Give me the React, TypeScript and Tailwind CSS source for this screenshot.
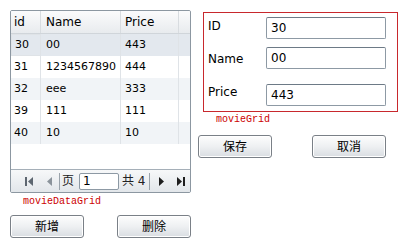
import React from 'react';

const rows = [
  { id: '30', name: '00', price: '443' },
  { id: '31', name: '1234567890', price: '444' },
  { id: '32', name: 'eee', price: '333' },
  { id: '39', name: '111', price: '111' },
  { id: '40', name: '10', price: '10' },
];

const cjk = "font-['DejaVu_Sans','Noto_Sans_CJK_SC',sans-serif]";
const mono = "font-['Liberation_Mono','Noto_Sans_CJK_SC',monospace]";

const Btn: React.FC<{ label: string }> = ({ label }) => (
  <button className="w-[74px] h-[23px] rounded-[3px] border border-[#7a8087] bg-gradient-to-b from-[#fdfdfd] via-[#eef0f2] to-[#d9dde2] text-[12px] text-black leading-none flex items-center justify-center shadow-[inset_0_0_0_1px_#ffffff]">
    {label}
  </button>
);

const Field: React.FC<{ label: string; value: string; mt: string; rowMt: string }> = ({ label, value, mt, rowMt }) => (
  <div className={`flex items-start ${rowMt}`}>
    <div className={`w-[58px] text-[12px] leading-[14px] text-black ${mt}`}>{label}</div>
    <div className="w-[120px] h-[22px] rounded-[2px] border border-[#8d99a4] border-t-[#6d7a86] bg-white pl-[4px] flex items-center text-[12px] text-black">
      {value}
    </div>
  </div>
);

export default function App() {
  return (
    <div className={`w-[412px] h-[245px] bg-white flex pl-[10px] pt-[10px] ${cjk}`}>
      {/* DataGrid column */}
      <div className="w-[181px] flex flex-col">
        <div className="h-[183px] rounded-[2px] border border-[#8c97a1] flex flex-col overflow-hidden text-[11px] text-black">
          {/* header */}
          <div className="grid grid-cols-[30px_80px_58px_11px] h-[23px] bg-gradient-to-b from-[#fbfbfc] to-[#e8ebee] border-b border-[#d0d5da]">
            <div className="border-r border-[#d8dce0] pl-[3px] flex items-center text-[12px]">id</div>
            <div className="border-r border-[#d8dce0] pl-[5px] flex items-center text-[12px]">Name</div>
            <div className="border-r border-[#d8dce0] pl-[4px] flex items-center text-[12px]">Price</div>
            <div />
          </div>
          {rows.map((r, i) => (
            <div
              key={r.id}
              className={`grid grid-cols-[30px_80px_58px_11px] h-[22px] ${
                i === 0 ? 'bg-[#e3e8ee]' : i % 2 === 0 ? 'bg-[#f1f4f7]' : 'bg-white'
              }`}
            >
              <div
                className={`border-r border-[#dfe3e7] pl-[3px] flex items-center ${
                  i === 0 ? 'border border-[#7fb1cf]' : ''
                }`}
              >
                {r.id}
              </div>
              <div className="border-r border-[#dfe3e7] pl-[5px] flex items-center">{r.name}</div>
              <div className="border-r border-[#dfe3e7] pl-[4px] flex items-center">{r.price}</div>
              <div />
            </div>
          ))}
          <div className="flex-1 bg-white" />
          {/* pager */}
          <div className="h-[23px] border-t border-[#a5afb8] bg-gradient-to-b from-[#f7f8f9] to-[#e2e6ea] flex items-center text-[12px] text-[#222]">
            <svg width="9" height="9" viewBox="0 0 9 9" className="ml-[14px]">
              <rect x="0" y="0" width="2" height="9" fill="#5d6670" />
              <path d="M8 0 L3 4.5 L8 9 Z" fill="#5d6670" />
            </svg>
            <svg width="6" height="9" viewBox="0 0 6 9" className="ml-[13px]">
              <path d="M5 0 L0 4.5 L5 9 Z" fill="#8b939b" />
            </svg>
            <div className="ml-[6px] w-px h-[17px] bg-[#9aa3ab]" />
            <span className="ml-[2px]">页</span>
            <div className="ml-[5px] w-[40px] h-[17px] rounded-[2px] border border-[#8d99a4] bg-white pl-[3px] flex items-center text-[12px] text-black">1</div>
            <span className="ml-[3px]">共 4</span>
            <div className="ml-[4px] w-px h-[17px] bg-[#9aa3ab]" />
            <svg width="6" height="9" viewBox="0 0 6 9" className="ml-[9px]">
              <path d="M0 0 L5 4.5 L0 9 Z" fill="#1e1e1e" />
            </svg>
            <svg width="8" height="9" viewBox="0 0 8 9" className="ml-[12px]">
              <path d="M0 0 L5 4.5 L0 9 Z" fill="#1e1e1e" />
              <rect x="6" y="0" width="2" height="9" fill="#1e1e1e" />
            </svg>
          </div>
        </div>
        <div className={`mt-[2px] pl-[13px] text-[10px] leading-[14px] text-[#cc0000] ${mono}`}>movieDataGrid</div>
        <div className="mt-[6px] flex justify-between">
          <Btn label="新增" />
          <Btn label="删除" />
        </div>
      </div>

      {/* Detail column */}
      <div className="ml-[7px] w-[188px] flex flex-col">
        <div className="ml-[5px] mt-[2px] w-[195px] h-[100px] border border-[#c8282d] pl-[4px] pt-[4px] flex flex-col">
          <Field label="ID" value="30" mt="mt-[2px]" rowMt="" />
          <Field label="Name" value="00" mt="mt-[5px]" rowMt="mt-[8px]" />
          <Field label="Price" value="443" mt="mt-[1px]" rowMt="mt-[15px]" />
        </div>
        <div className={`mt-[1px] pl-[18px] text-[10px] leading-[14px] text-[#cc0000] ${mono}`}>movieGrid</div>
        <div className="mt-[8px] flex gap-[40px]">
          <Btn label="保存" />
          <Btn label="取消" />
        </div>
      </div>
    </div>
  );
}
